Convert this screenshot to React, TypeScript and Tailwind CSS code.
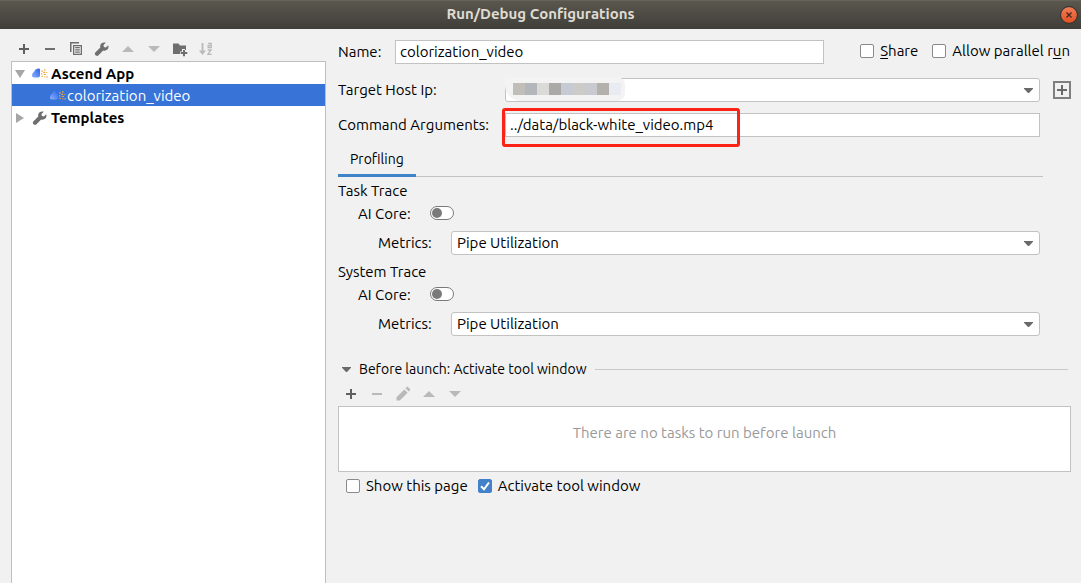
import { useState, type ReactNode } from "react";

function PlusIcon() {
  return (
    <svg width="16" height="16" viewBox="0 0 16 16" fill="#5f5f5f" shapeRendering="crispEdges">
      <path d="M7 3h2v4h4v2H9v4H7V9H3V7h4z" />
    </svg>
  );
}

function MinusIcon({ color }: { color: string }) {
  return (
    <svg width="16" height="16" viewBox="0 0 16 16" fill={color} shapeRendering="crispEdges">
      <path d="M3 7h10v2H3z" />
    </svg>
  );
}

function CopyIcon() {
  return (
    <svg width="16" height="16" viewBox="0 0 16 16" fill="#6e6e6e">
      <path d="M2 1h9v1.5H3.5V11H2z" />
      <path fillRule="evenodd" d="M5 4h9v10H5zM6.300 5.300v7.400h6.400V5.300zM7.200 6h4.600v1.200H7.200zm0 2.300h4.600v1.200H7.200zm0 2.300h4.600v1.200H7.200z" />
    </svg>
  );
}

function WrenchIcon() {
  return (
    <svg width="16" height="16" viewBox="0 0 16 16" fill="#6e6e6e">
      <path d="M14.2 4.2 11.9 6.4 9.9 5.9 9.5 4.1 11.8 1.7C10.200 1.100 8.500 1.400 7.300 2.600 6.200 3.700 5.900 5.200 6.300 6.600L1.300 11.600C.7 12.200.7 13.200 1.300 13.900L1.900 14.500C2.600 15.100 3.600 15.100 4.200 14.500L9.200 9.500C10.600 10 12.200 9.700 13.300 8.600 14.500 7.400 14.800 5.700 14.200 4.200Z" />
    </svg>
  );
}

function UpIcon() {
  return (
    <svg width="16" height="16" viewBox="0 0 16 16" fill="#b9b9b9">
      <path d="M8 5l6 6H2z" />
    </svg>
  );
}

function DownIcon() {
  return (
    <svg width="16" height="16" viewBox="0 0 16 16" fill="#b9b9b9">
      <path d="M8 11l6-6H2z" />
    </svg>
  );
}

function FolderAddIcon() {
  return (
    <svg width="16" height="16" viewBox="0 0 16 16" fill="#6e6e6e">
      <path d="M1 2.500h5.500l1.500 2h6V9h-1V8h-3v2.500H8V13H1z" />
      <path d="M11 9h2v2h2.300v2H13v2.300h-2V13H8.700v-2H11z" />
    </svg>
  );
}

function SortIcon() {
  return (
    <svg width="16" height="16" viewBox="0 0 16 16" fill="none" stroke="#b9b9b9">
      <path d="M4.500 2v9" strokeWidth="1.800" />
      <path d="M1 9.500h7L4.500 14z" fill="#b9b9b9" stroke="none" />
      <path d="M10 2.300h3.200v4.200h-3V4.400h3M9.700 9h3.400L9.900 13.400h3.800" strokeWidth="1.300" />
    </svg>
  );
}

function PencilIcon() {
  return (
    <svg width="16" height="16" viewBox="0 0 16 16" fill="#b9b9b9">
      <path d="M1.500 11.200 9.300 3.400l3.300 3.300-7.800 7.800H1.500zM10.400 2.300l1.100-1.100c.5-.5 1.200-.5 1.700 0l1.600 1.600c.5.5.5 1.200 0 1.700l-1.100 1.100z" />
    </svg>
  );
}

function AscendIcon() {
  return (
    <svg width="16" height="16" viewBox="0 0 16 16">
      <defs>
        <linearGradient id="ascend" x1="0" y1="1" x2="1" y2="0">
          <stop offset="0" stopColor="#8db2ff" />
          <stop offset="1" stopColor="#2d62ea" />
        </linearGradient>
      </defs>
      <path d="M0 9.800C0 8.200.6 6.800 2 6 3 3.600 4.700 2.500 6.800 2.500c.8 0 1.200.4 1.200 1.200V9.500c0 1.300-.7 2-2 2H2C.8 11.500 0 10.900 0 9.800z" fill="url(#ascend)" />
      <path
        d="M9 5h2M12 3.800h1.500M9 7.800h1.300M11.300 6.300h2M11.800 8.500h2.200M9.500 10.300h1.300M12.300 10.800h1M14.500 10.800h1.300M14.300 6.500h1"
        stroke="#f2a53c"
        strokeWidth="1.200"
      />
    </svg>
  );
}

function Caret({ className = "" }: { className?: string }) {
  return (
    <svg width="9" height="5" viewBox="0 0 9 5" fill="#6a6a6a" className={className}>
      <path d="M0 0h9v.8L5 5H4L0 .8z" />
    </svg>
  );
}

function ToolButton({ label, disabled, children }: { label: string; disabled?: boolean; children: ReactNode }) {
  return (
    <button type="button" aria-label={label} disabled={disabled} className="flex h-6 w-[26px] items-center justify-center">
      {children}
    </button>
  );
}

function CheckBox({ id, defaultChecked, children }: { id: string; defaultChecked?: boolean; children: ReactNode }) {
  const [checked, setChecked] = useState(!!defaultChecked);
  return (
    <label htmlFor={id} className="flex items-center gap-1.5 whitespace-nowrap">
      <span className="relative flex">
        <input
          id={id}
          type="checkbox"
          checked={checked}
          onChange={(e) => setChecked(e.target.checked)}
          className="size-3.5 appearance-none rounded-[2px] border border-[#8a8a8a] bg-white checked:border-[#4382c9] checked:bg-[#4382c9]"
        />
        {checked && (
          <svg viewBox="0 0 14 14" fill="none" stroke="#fff" strokeWidth="2" className="pointer-events-none absolute inset-0 size-3.5">
            <path d="M3 7.300 6 10.300 11 3.500" />
          </svg>
        )}
      </span>
      <span>{children}</span>
    </label>
  );
}

function TraceGroup({ title, id }: { title: string; id: string }) {
  return (
    <section>
      <h2 className="flex h-6 items-center">{title}</h2>
      <div className="flex h-[22px] items-center pl-5">
        <label htmlFor={id + "-core"} className="w-[72px]">
          AI Core:
        </label>
        <input
          id={id + "-core"}
          type="checkbox"
          role="switch"
          className="mb-0.5 flex h-3.5 w-6 appearance-none items-center rounded-full border border-[#7a7a7a] bg-white px-px before:size-2.5 before:rounded-full before:bg-[#7a7a7a] checked:justify-end"
        />
      </div>
      <div className="mt-1.5 mr-[31px] flex items-center pl-10">
        <label htmlFor={id + "-metrics"} className="w-[73px]">
          Metrics:
        </label>
        <div className="relative flex-1">
          <select
            id={id + "-metrics"}
            className="block h-6 w-full appearance-none rounded-[3px] border border-[#c2c2c2] bg-white px-[5px]"
          >
            <option>Pipe Utilization</option>
          </select>
          <Caret className="pointer-events-none absolute top-[10px] right-[7px]" />
        </div>
      </div>
    </section>
  );
}

function MaskedAddress() {
  return (
    <div className="pointer-events-none absolute -top-px left-0 flex h-6 w-[120px] items-center rounded-r-lg rounded-bl-2xl bg-[#f3f3f3] pb-px pl-2">
      <span className="h-3 w-3 bg-[#c1bdb8]" />
      <span className="h-3 w-3 bg-[#b3b7bc]" />
      <span className="h-3 w-3 bg-[#dadbd6]" />
      <span className="h-3 w-3 bg-[#aaa9a8]" />
      <span className="h-3 w-3 bg-[#c6cad2]" />
      <span className="h-3 w-3 bg-[#cdcbc7]" />
      <span className="h-3 w-3 bg-[#c8cad0]" />
      <span className="h-3 w-3 bg-[#b4b0ac]" />
      <span className="h-3 w-3 bg-[#e8ebf2]" />
    </div>
  );
}

export default function App() {
  return (
    <div className="flex min-h-screen flex-col bg-[#f1f1f1] font-['Ubuntu','Noto_Sans',sans-serif] text-[15px] leading-5 text-black">
      <header className="relative flex h-[29px] items-center justify-center border-t border-[#66645a] bg-linear-to-b from-[#5a574e] to-[#3f3e39] text-[#dfdbd2]">
        <h1 className="pb-0.5 font-bold">Run/Debug Configurations</h1>
        <button
          type="button"
          aria-label="Close"
          className="absolute right-1 flex size-4 items-center justify-center rounded-full bg-linear-to-b from-[#f37b56] to-[#e2511f] outline outline-[#34332f]"
        >
          <svg width="8" height="8" viewBox="0 0 8 8" stroke="#45281c" strokeWidth="1.400">
            <path d="M1.500 1.500l5 5M6.500 1.500l-5 5" />
          </svg>
        </button>
      </header>

      <main className="flex flex-1">
        <aside className="flex w-[326px] shrink-0 flex-col pl-[11px]">
          <div className="flex h-8 items-center pt-2">
            <ToolButton label="Add"><PlusIcon /></ToolButton>
            <ToolButton label="Remove"><MinusIcon color="#6e6e6e" /></ToolButton>
            <ToolButton label="Copy"><CopyIcon /></ToolButton>
            <ToolButton label="Edit templates"><WrenchIcon /></ToolButton>
            <ToolButton label="Move up" disabled><UpIcon /></ToolButton>
            <ToolButton label="Move down" disabled><DownIcon /></ToolButton>
            <ToolButton label="Create folder"><FolderAddIcon /></ToolButton>
            <ToolButton label="Sort" disabled><SortIcon /></ToolButton>
          </div>
          <ul className="flex-1 border border-b-0 border-[#bfbfbf] bg-white">
            <li className="flex h-[22px] items-center pt-0.5 pl-[3px] font-bold">
              <svg width="10" height="8" viewBox="0 0 10 8" fill="#a6a6a6"><path d="M0 0h10L5 8z" /></svg>
              <span className="mr-[3px] ml-[7px]"><AscendIcon /></span>
              Ascend App
            </li>
            <li className="flex h-[22px] items-center bg-[#3874d8] pt-0.5 pl-[38px] text-white">
              <span className="mr-px"><AscendIcon /></span>
              colorization_video
            </li>
            <li className="flex h-[22px] items-center pt-0.5 pl-1 font-bold">
              <svg width="8" height="10" viewBox="0 0 8 10" fill="#a6a6a6"><path d="M0 0v10L8 5z" /></svg>
              <span className="mr-[3px] ml-2"><WrenchIcon /></span>
              Templates
            </li>
          </ul>
        </aside>

        <form className="min-w-0 flex-1 pt-[11px] pr-[10px] pl-3">
          <div className="flex h-6 items-center">
            <label htmlFor="name" className="w-[57px]">Name:</label>
            <input id="name" defaultValue="colorization_video" className="h-6 min-w-0 flex-1 border border-[#c2c2c2] bg-white px-1 pb-0.5" />
            <div className="mr-px ml-9 flex gap-3.5 pb-0.5">
              <CheckBox id="share"><u className="underline-offset-2">S</u>hare</CheckBox>
              <CheckBox id="parallel">Allow parallel r<u className="underline-offset-2">u</u>n</CheckBox>
            </div>
          </div>

          <div className="mt-3.5 flex h-6 items-center">
            <label htmlFor="host" className="w-[167px]">Target Host Ip:</label>
            <div className="relative flex-1">
              <select id="host" className="block h-6 w-full appearance-none rounded-[3px] border border-[#c2c2c2] bg-white" />
              <MaskedAddress />
              <Caret className="pointer-events-none absolute top-[10px] right-[7px]" />
            </div>
            <button type="button" aria-label="Add host" className="ml-[13px] flex size-[18px] items-center justify-center border-2 border-[#7f7f7f]">
              <svg width="10" height="10" viewBox="0 0 10 10" fill="#6a6a6a" shapeRendering="crispEdges"><path d="M4 0h2v4h4v2H6v4H4V6H0V4h4z" /></svg>
            </button>
          </div>

          <div className="mt-[11px] mr-[31px] flex h-6 items-center">
            <label htmlFor="args" className="w-[167px]">Command Arguments:</label>
            <div className="relative flex-1">
              <input id="args" defaultValue="../data/black-white_video.mp4" className="block h-6 w-full border border-[#c2c2c2] bg-white px-1 pb-0.5" />
              <div className="pointer-events-none absolute -top-[5px] -left-[3px] h-[39px] w-[238px] rounded-[3px] border-3 border-[#fb2315]" />
            </div>
          </div>

          <div role="tablist" className="mt-1.5 mr-7 flex bg-linear-to-t from-[#c2c2c2] from-[1px] to-transparent to-[1px] text-sm">
            <button type="button" role="tab" aria-selected="true" className="h-[34px] border-b-3 border-[#4083c9] px-3">
              Profiling
            </button>
          </div>

          <div className="mt-0.5 flex flex-col gap-[5px]">
            <TraceGroup title="Task Trace" id="task" />
            <TraceGroup title="System Trace" id="system" />
          </div>

          <div className="mt-[21px] mr-[3px] flex h-6 items-center text-sm">
            <button type="button" className="flex items-center gap-2 pl-1">
              <Caret />
              Before launch: Activate tool window
            </button>
            <span className="ml-2 h-px flex-1 bg-[#c9c9c9]" />
          </div>
          <div className="mt-px flex h-6">
            <ToolButton label="Add task"><PlusIcon /></ToolButton>
            <ToolButton label="Remove task" disabled><MinusIcon color="#b9b9b9" /></ToolButton>
            <ToolButton label="Edit task" disabled><PencilIcon /></ToolButton>
            <ToolButton label="Move task up" disabled><UpIcon /></ToolButton>
            <ToolButton label="Move task down" disabled><DownIcon /></ToolButton>
          </div>
          <div className="h-[66px] border border-[#c2c2c2] bg-white pt-4 text-center text-[#999]">
            There are no tasks to run before launch
          </div>
          <div className="flex h-7 items-center gap-2.5 pl-2">
            <CheckBox id="show-page">Show this page</CheckBox>
            <CheckBox id="activate" defaultChecked>Activate tool window</CheckBox>
          </div>
        </form>
      </main>
    </div>
  );
}
